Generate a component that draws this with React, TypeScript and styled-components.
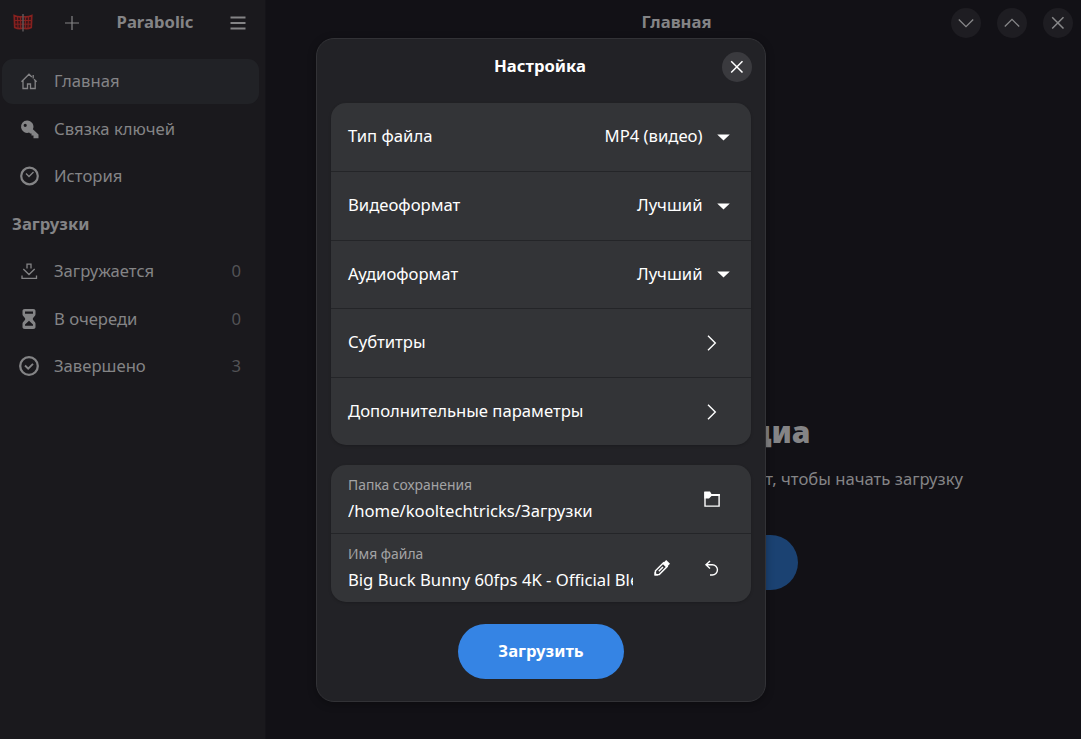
import React from "react";
import styled, { createGlobalStyle } from "styled-components";

const GlobalStyle = createGlobalStyle`
  * { box-sizing: border-box; }
  body { margin: 0; background: #121116; overflow: hidden; }
`;

const Window = styled.div`
  position: relative;
  display: flex;
  width: 1081px;
  height: 739px;
  overflow: hidden;
  background: #121116;
  color: #848486;
  font: 400 16.67px/24px "Noto Sans", sans-serif;
  white-space: nowrap;
`;

const Sidebar = styled.aside`
  width: 266px;
  flex: none;
  background: #1a191d;
  border-right: 1px solid #151419;
`;

const SidebarHeader = styled.header`
  display: grid;
  grid-template-columns: 46px 52px 114px 52px;
  align-items: center;
  height: 45px;
  margin-bottom: 14px;
`;

const IconCell = styled.span`
  display: flex;
  justify-content: center;
  svg { display: block; }
`;

const AppTitle = styled.span`
  padding-bottom: 2px;
  font-weight: 700;
  text-align: center;
`;

const Nav = styled.nav`
  display: flex;
  flex-direction: column;
  gap: 2.5px;
  padding: 0 6px 0 2px;
`;

const NavItem = styled.a<{ $active?: boolean }>`
  display: flex;
  align-items: center;
  height: 45px;
  padding: 0 18px 1px 17px;
  border-radius: 11px;
  background: ${(p) => (p.$active ? "#212226" : "transparent")};
  svg { flex: none; margin-right: 15px; }
`;

const Count = styled.span`
  margin-left: auto;
  color: #535356;
`;

const NavHeading = styled.h2`
  height: 45px;
  margin: 0;
  padding-left: 10px;
  font-size: 16.67px;
  line-height: 44px;
  font-weight: 700;
`;

const Main = styled.main`
  flex: 1;
  display: flex;
  flex-direction: column;
  align-items: center;
`;

const TitleBar = styled.header`
  display: grid;
  grid-template-columns: 1fr auto 1fr;
  align-items: center;
  width: 100%;
  height: 45px;
  padding: 0 8px 0 14px;
`;

const PageTitle = styled.h1`
  margin: 0;
  padding-bottom: 2px;
  font-size: 16.67px;
  line-height: 24px;
  font-weight: 700;
`;

const WindowButtons = styled.div`
  display: flex;
  justify-content: flex-end;
  gap: 16px;
`;

const RoundButton = styled.button<{ $bright?: boolean }>`
  display: grid;
  place-items: center;
  width: 30px;
  height: 30px;
  padding: 0;
  border: 0;
  border-radius: 50%;
  background: ${(p) => (p.$bright ? "#3a3a3e" : "#1e1d22")};
  color: ${(p) => (p.$bright ? "#fff" : "#88888a")};
`;

const Welcome = styled.section`
  display: flex;
  flex-direction: column;
  align-items: center;
  width: 580px;
  margin: 365px 1px 0 0;
`;

const WelcomeTitle = styled.h2`
  display: flex;
  justify-content: flex-end;
  width: 275px;
  margin: 0 0 13px;
  font-size: 30.2px;
  line-height: 44px;
  font-weight: 900;
`;

const WelcomeText = styled.p`
  display: flex;
  justify-content: flex-end;
  width: 580px;
  margin: 0;
`;

const WelcomeButton = styled.button`
  width: 250px;
  height: 55px;
  margin-top: 44px;
  border: 0;
  border-radius: 28px;
  background: #1b4272;
`;

const Dialog = styled.section`
  position: absolute;
  left: 315.5px;
  top: 38px;
  width: 450px;
  height: 663.5px;
  padding: 0 14px;
  border: 1px solid #323236;
  border-radius: 18px;
  background: #222226;
  box-shadow: 0 2px 8px rgba(0, 0, 0, 0.3);
  color: #fff;
`;

const DialogHeader = styled.header`
  display: grid;
  grid-template-columns: 30px 1fr 30px;
  align-items: center;
  height: 56px;
  margin: 0 -2px 8px 0;
  padding-right: 1px;
`;

const DialogTitle = styled.h2`
  margin: 0;
  padding: 0 2px 2px 0;
  font-size: 16.67px;
  line-height: 24px;
  font-weight: 700;
  text-align: center;
`;

const Card = styled.div`
  margin-bottom: 19.700px;
  border-radius: 15px;
  background: #333437;
  box-shadow: 0 1px 3px rgba(0, 0, 0, 0.2);
`;

const Row = styled.div<{ $inset: number }>`
  display: flex;
  align-items: center;
  height: 68.5px;
  padding: 0 ${(p) => p.$inset}px 2px 17.5px;
  &:first-child { height: 68.4px; }
  & + & { border-top: 1px solid #242528; }
  svg { flex: none; display: block; position: relative; top: 1px; }
`;

const Value = styled.span`
  margin: 0 14px 0 auto;
`;

const Spacer = styled.span`
  flex: 1;
`;

const Entry = styled.div`
  width: 285px;
  overflow: hidden;
  padding-bottom: 1px;
`;

const EntryLabel = styled.div`
  color: #a3a3a5;
  font-size: 13.9px;
  line-height: 25px;
`;

const EntryValue = styled.div`
  line-height: 27px;
`;

const IconGap = styled.span`
  width: 34px;
`;

const DownloadButton = styled.button`
  display: block;
  width: 166px;
  height: 55px;
  margin: 22.500px auto 0;
  padding: 0 0 2px 1px;
  border: 0;
  border-radius: 28px;
  background: #3584e4;
  color: #fff;
  font: 700 16.67px "Noto Sans", sans-serif;
`;

const Icon = ({ size = 16, children }: { size?: number; children: React.ReactNode }) => (
  <svg width={size} height={size} viewBox={`0 0 ${size} ${size}`} fill="none" stroke="currentColor" strokeWidth="1">
    {children}
  </svg>
);

const Logo = () => (
  <svg width="20" height="20" viewBox="0 0 20 20" fill="none">
    <path d="M1.200 2.500Q5.500 4.500 10 3.500Q14.500 4.500 18.800 2.500L18.300 14.500Q14 16.500 10 15Q6 16.500 1.700 14.500Z" fill="#3a1519" stroke="#87211f" strokeWidth="1.600" />
    <path d="M1.500 7.500H18.500M1.700 11.200H18.300M4.500 4 5 15M7.500 4 7.700 15M12.500 4 12.300 15M15.500 4 15 15" stroke="#87211f" strokeWidth="1" />
    <path d="M10 1V18.500" stroke="#5c5759" strokeWidth="1.500" />
  </svg>
);

const HomeIcon = () => (
  <Icon size={20}>
    <path d="M2.500 10.800 10 3.200 12.800 6M15 8.200 17.600 10.800M4 9.500V17.500H8.500V13H11.500V17.500H16.200V9.500M14.200 4V7.500" strokeWidth="1.300" />
  </Icon>
);
const KeyIcon = () => (
  <Icon size={20}>
    <path
      d="M8 1.500a6.200 6.200 0 1 0 2.100 12.100l1 .9h1.400v2h2v2.800h5v-3.800l-5.600-5.200A6.200 6.200 0 0 0 8 1.500ZM6.200 4.700a1.600 1.600 0 1 1 0 3.200 1.600 1.600 0 0 1 0-3.200Z"
      fill="currentColor" fillRule="evenodd" stroke="none"
    />
  </Icon>
);
const ClockIcon = () => (
  <Icon size={20}>
    <circle cx="10.500" cy="10" r="8.300" strokeWidth="2.200" />
    <path d="m7 7.500 3 3L14.500 6" strokeWidth="1.300" />
  </Icon>
);
const DownloadIcon = () => (
  <Icon size={20}>
    <path d="M8 7.500V3.200H12V7.500M4.300 8 10 13.500 15.700 8M3 14.500V17.300H17.500V14.500" strokeWidth="1.300" />
  </Icon>
);
const HourglassIcon = () => (
  <Icon size={20}>
    <path
      d="M5.800 0h8.400c1.500 0 2.300.8 2.300 2v3.500c0 1.800-2.800 3-2.800 4.500s2.800 2.700 2.800 4.500V18c0 1.300-.8 2-2.300 2H5.800c-1.500 0-2.300-.7-2.300-2v-3.500c0-1.800 2.800-3 2.800-4.500S3.500 7.300 3.500 5.500V2c0-1.200.8-2 2.300-2ZM6 2.500V4.800h8V2.500ZM10 11.800l-4 3.600v1.300h8v-1.300Z"
      fill="currentColor" fillRule="evenodd" stroke="none"
    />
  </Icon>
);
const DoneIcon = () => (
  <Icon size={20}>
    <circle cx="10" cy="10" r="8.800" strokeWidth="2.300" />
    <path d="m6 9.500 3.200 3.200L14 7.800" strokeWidth="1.900" />
  </Icon>
);
const CloseIcon = () => (
  <Icon>
    <path d="M2.200 2.200 13.500 13.500M13.500 2.200 2.200 13.500" strokeWidth="1.500" />
  </Icon>
);
const DropIcon = () => (
  <svg width="13" height="7" viewBox="0 0 13 7">
    <path d="M.2.500H12.800L6.500 6.500Z" fill="currentColor" />
  </svg>
);
const ChevronIcon = () => (
  <Icon>
    <path d="M4 .8 11.300 8 4 15.200" strokeWidth="1.400" />
  </Icon>
);
const FolderIcon = () => (
  <Icon>
    <path d="M1 1V15.100H15.100V3.600H7" strokeWidth="1.400" />
    <path d="M.3.500H6L7.500 3H15.800V5H7.500L5 7.500H.3Z" fill="currentColor" stroke="none" />
  </Icon>
);
const PencilIcon = () => (
  <Icon>
    <path d="M1.200 14.800 1.500 10.800 9.500 2.800 13.200 6.500 5.200 14.500ZM4.800 11.200 9 7" strokeWidth="1.500" />
    <path d="M8.500 3.700 12.200 0 16 3.800 12.300 7.500ZM.5 11.800 4.200 15.500H.5Z" fill="currentColor" stroke="none" />
  </Icon>
);
const UndoIcon = () => (
  <Icon>
    <path d="M6 .9 2 4.700 6 8.500M2 4.700H8.300A5.150 5.150 0 0 1 8.300 15H6" strokeWidth="1.400" />
  </Icon>
);

const MAIN_LINKS = [
  { label: "Главная", icon: <HomeIcon />, active: true },
  { label: "Связка ключей", icon: <KeyIcon /> },
  { label: "История", icon: <ClockIcon /> },
];
const DOWNLOAD_LINKS = [
  { label: "Загружается", icon: <DownloadIcon />, count: 0 },
  { label: "В очереди", icon: <HourglassIcon />, count: 0 },
  { label: "Завершено", icon: <DoneIcon />, count: 3 },
];
const FORMATS = [
  ["Тип файла", "MP4 (видео)"],
  ["Видеоформат", "Лучший"],
  ["Аудиоформат", "Лучший"],
];

export default function App() {
  return (
    <Window>
      <GlobalStyle />
      <Sidebar>
        <SidebarHeader>
          <IconCell><Logo /></IconCell>
          <IconCell><Icon><path d="M8 1V15M1 8H15" strokeWidth="1.200" /></Icon></IconCell>
          <AppTitle>Parabolic</AppTitle>
          <IconCell><Icon><path d="M.5 2.500H15.500M.5 8H15.500M.5 13.500H15.500" strokeWidth="2.200" /></Icon></IconCell>
        </SidebarHeader>
        <Nav>
          {MAIN_LINKS.map((l) => (
            <NavItem key={l.label} $active={l.active}>{l.icon}{l.label}</NavItem>
          ))}
          <NavHeading>Загрузки</NavHeading>
          {DOWNLOAD_LINKS.map((l) => (
            <NavItem key={l.label}>{l.icon}{l.label}<Count>{l.count}</Count></NavItem>
          ))}
        </Nav>
      </Sidebar>
      <Main>
        <TitleBar>
          <span />
          <PageTitle>Главная</PageTitle>
          <WindowButtons>
            <RoundButton><Icon><path d="m.8 4.500 7.200 7.200 7.200-7.200" strokeWidth="1.300" /></Icon></RoundButton>
            <RoundButton><Icon><path d="m.8 11.500 7.200-7.200 7.200 7.200" strokeWidth="1.300" /></Icon></RoundButton>
            <RoundButton><CloseIcon /></RoundButton>
          </WindowButtons>
        </TitleBar>
        <Welcome>
          <WelcomeTitle>Загрузка медиа</WelcomeTitle>
          <WelcomeText>Вставьте ссылку на веб-сайт, чтобы начать загрузку</WelcomeText>
          <WelcomeButton />
        </Welcome>
      </Main>
      <Dialog>
        <DialogHeader>
          <span />
          <DialogTitle>Настройка</DialogTitle>
          <RoundButton $bright><CloseIcon /></RoundButton>
        </DialogHeader>
        <Card>
          {FORMATS.map(([label, value]) => (
            <Row key={label} $inset={21}>{label}<Value>{value}</Value><DropIcon /></Row>
          ))}
          <Row $inset={30.5}>Субтитры<Spacer /><ChevronIcon /></Row>
          <Row $inset={30.5}>Дополнительные параметры<Spacer /><ChevronIcon /></Row>
        </Card>
        <Card>
          <Row $inset={30.5}>
            <Entry>
              <EntryLabel>Папка сохранения</EntryLabel>
              <EntryValue>/home/kooltechtricks/Загрузки</EntryValue>
            </Entry>
            <Spacer /><FolderIcon />
          </Row>
          <Row $inset={30.5}>
            <Entry>
              <EntryLabel>Имя файла</EntryLabel>
              <EntryValue>Big Buck Bunny 60fps 4K - Official Blender</EntryValue>
            </Entry>
            <Spacer /><PencilIcon /><IconGap /><UndoIcon />
          </Row>
        </Card>
        <DownloadButton>Загрузить</DownloadButton>
      </Dialog>
    </Window>
  );
}
